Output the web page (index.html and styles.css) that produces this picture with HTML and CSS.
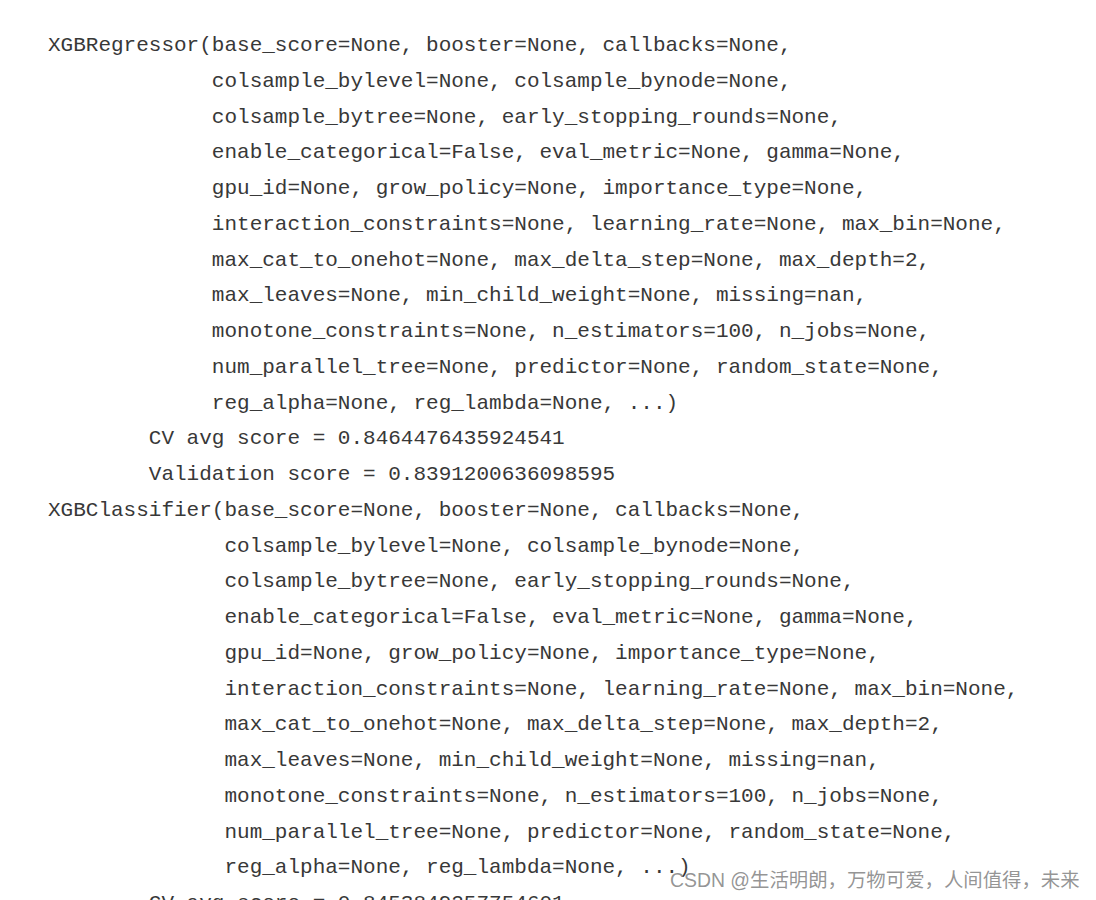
FILE: index.html
```html
<!DOCTYPE html>
<html>
<head>
<meta charset="utf-8">
<link rel="stylesheet" href="styles.css">
</head>
<body>
<div class="page">
<pre class="output">XGBRegressor(base_score=None, booster=None, callbacks=None,
             colsample_bylevel=None, colsample_bynode=None,
             colsample_bytree=None, early_stopping_rounds=None,
             enable_categorical=False, eval_metric=None, gamma=None,
             gpu_id=None, grow_policy=None, importance_type=None,
             interaction_constraints=None, learning_rate=None, max_bin=None,
             max_cat_to_onehot=None, max_delta_step=None, max_depth=2,
             max_leaves=None, min_child_weight=None, missing=nan,
             monotone_constraints=None, n_estimators=100, n_jobs=None,
             num_parallel_tree=None, predictor=None, random_state=None,
             reg_alpha=None, reg_lambda=None, ...)
        CV avg score = 0.8464476435924541
        Validation score = 0.8391200636098595
XGBClassifier(base_score=None, booster=None, callbacks=None,
              colsample_bylevel=None, colsample_bynode=None,
              colsample_bytree=None, early_stopping_rounds=None,
              enable_categorical=False, eval_metric=None, gamma=None,
              gpu_id=None, grow_policy=None, importance_type=None,
              interaction_constraints=None, learning_rate=None, max_bin=None,
              max_cat_to_onehot=None, max_delta_step=None, max_depth=2,
              max_leaves=None, min_child_weight=None, missing=nan,
              monotone_constraints=None, n_estimators=100, n_jobs=None,
              num_parallel_tree=None, predictor=None, random_state=None,
              reg_alpha=None, reg_lambda=None, ...)
        CV avg score = 0.8453849257754601
        Validation score = 0.8391200636098595</pre>
<div class="watermark">CSDN @生活明朗，万物可爱，人间值得，未来</div>
</div>
</body>
</html>
```
FILE: styles.css
```css
html, body {
  margin: 0;
  padding: 0;
  background: #ffffff;
}
.page {
  position: relative;
  width: 1096px;
  height: 900px;
  overflow: hidden;
}
.output {
  margin: 0;
  padding: 28px 0 0 48px;
  font-family: "Liberation Mono", "DejaVu Sans Mono", monospace;
  font-size: 21px;
  line-height: 35.75px;
  color: #383838;
  white-space: pre;
}
.watermark {
  position: absolute;
  left: 670px;
  top: 866px;
  font-family: "Liberation Sans", "Noto Sans CJK SC", sans-serif;
  font-size: 19.4px;
  line-height: 28px;
  color: rgba(130, 130, 130, 0.85);
  white-space: nowrap;
}
```
